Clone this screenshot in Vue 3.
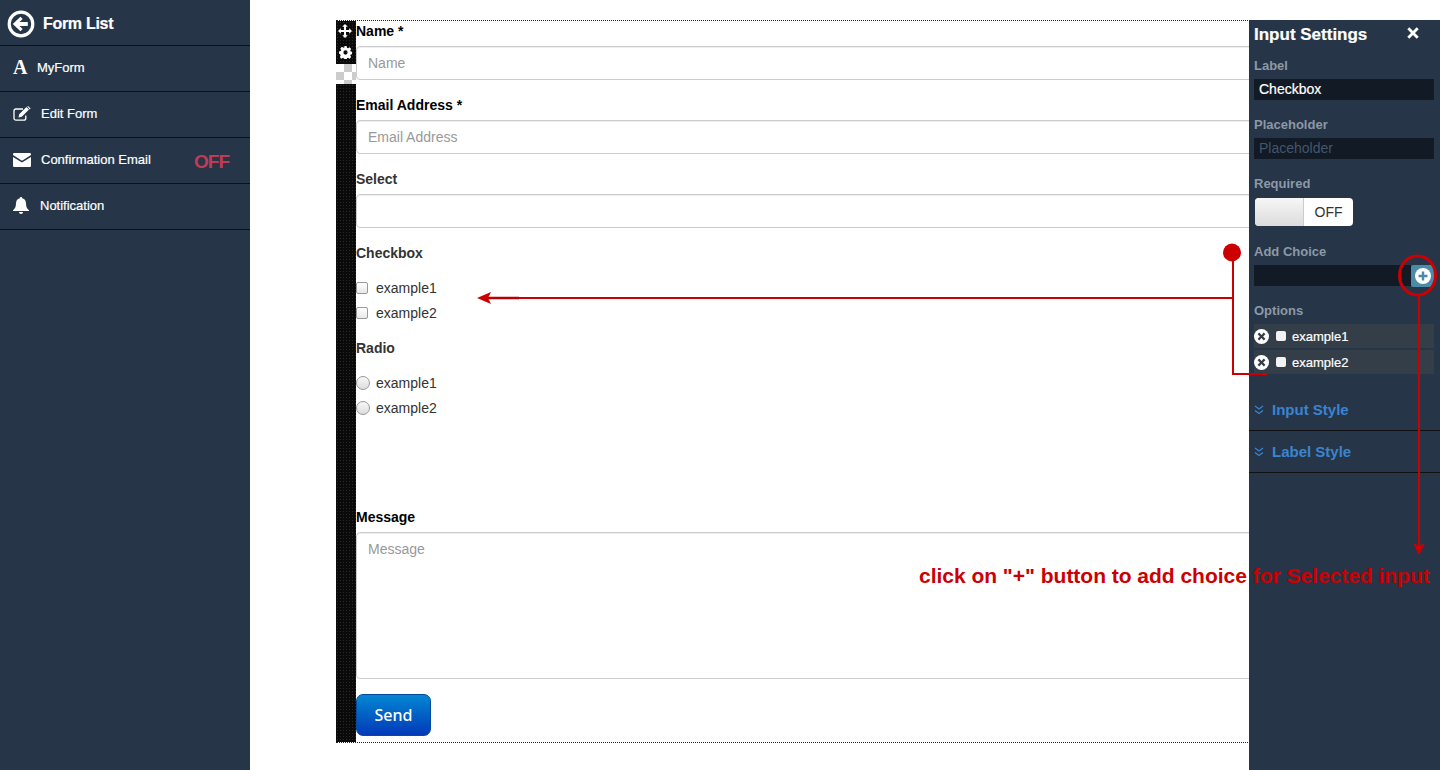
<script setup>
const sideItems = [
  { id: 'form', label: 'MyForm' },
  { id: 'edit', label: 'Edit Form' },
  { id: 'mail', label: 'Confirmation Email', off: true },
  { id: 'bell', label: 'Notification' },
]
const choices = ['example1', 'example2']
</script>

<template>
  <div class="page">
    <aside class="sidebar">
      <div class="side-head">
        <svg class="back" viewBox="0 0 28 28" width="28" height="28">
          <circle cx="14" cy="14" r="11.8" fill="none" stroke="#fff" stroke-width="3.2" />
          <path d="M5.8 14 13.4 6.8l2.3 2.3-3.2 3h8.3v3.8h-8.3l3.2 3-2.3 2.3z" fill="#fff" />
        </svg>
        <span>Form List</span>
      </div>
      <div v-for="item in sideItems" :key="item.id" class="side-item" :class="'item-' + item.id">
        <span v-if="item.id === 'form'" class="glyph-a">A</span>
        <svg v-else-if="item.id === 'edit'" class="ic" viewBox="0 0 18 16" width="18" height="16">
          <path d="M12.8 9.5v2.7a2 2 0 0 1-2 2H3a2 2 0 0 1-2-2V5a2 2 0 0 1 2-2h7" fill="none" stroke="#fff" stroke-width="1.3" />
          <path d="M6.2 8.2 13.4 1l2.6 2.6-7.2 7.2-3.3.8zM14.2.3l.8-.3 2.6 2.6-.8.8z" fill="#fff" />
        </svg>
        <svg v-else-if="item.id === 'mail'" class="ic" viewBox="0 0 18 14" width="18" height="14">
          <path d="M1.2 0h15.6A1.2 1.2 0 0 1 18 1.2v.9L9 7.7 0 2.1v-.9A1.2 1.2 0 0 1 1.2 0z" fill="#fff" />
          <path d="M0 4v8.8A1.2 1.2 0 0 0 1.2 14h15.6a1.2 1.2 0 0 0 1.2-1.2V4L9 9.6z" fill="#fff" />
        </svg>
        <svg v-else class="ic" viewBox="0 0 16 17" width="16" height="17">
          <path d="M8 0a1.2 1.2 0 0 1 1.2 1.3C11.8 1.8 13 4 13 6.5c0 3.5 1.2 5.3 3 6.8v.7H0v-.7c1.8-1.5 3-3.3 3-6.8C3 4 4.200 1.800 6.800 1.300A1.200 1.200 0 0 1 8 0zM6 15h4a2 2 0 0 1-4 0z" fill="#fff" />
        </svg>
        <span class="side-label">{{ item.label }}</span>
        <span v-if="item.off" class="off">OFF</span>
      </div>
    </aside>

    <main class="stage">
      <div class="form-wrap">
        <div class="strip">
          <div class="handles">
            <svg viewBox="0 0 14 14" width="14" height="14">
              <path d="M7 0 9.800 2.800H8V6h3.200V4.200L14 7l-2.800 2.800V8H8v3.200h1.800L7 14l-2.800-2.800H6V8H2.800v1.800L0 7l2.800-2.800V6H6V2.800H4.200z" fill="#fff" />
            </svg>
            <svg viewBox="0 0 14 14" width="13" height="13">
              <path fill-rule="evenodd" d="M5.800 0h2.400l.4 1.900 1.100.5 1.700-1 1.700 1.700-1 1.700.5 1.100 1.900.4v2.400l-1.900.4-.5 1.100 1 1.700-1.700 1.700-1.700-1-1.100.5-.4 1.900H5.800l-.4-1.900-1.100-.5-1.700 1-1.700-1.700 1-1.700-.5-1.100L0 8.200V5.800l1.900-.4.500-1.100-1-1.700 1.700-1.700 1.700 1 1.100-.5zM7 4.700a2.300 2.300 0 1 0 0 4.600 2.300 2.300 0 0 0 0-4.600z" fill="#fff" />
            </svg>
          </div>
          <div class="checker"></div>
          <div class="strip-rest"></div>
        </div>

        <form class="form" @submit.prevent>
          <label class="lbl black first">Name *</label>
          <input class="ctl" placeholder="Name" />
          <label class="lbl black">Email Address *</label>
          <input class="ctl" placeholder="Email Address" />
          <label class="lbl">Select</label>
          <div class="ctl"></div>

          <label class="lbl">Checkbox</label>
          <div class="choices">
            <div v-for="c in choices" :key="c" class="choice">
              <span class="fake-check"></span><span>{{ c }}</span>
            </div>
          </div>
          <label class="lbl">Radio</label>
          <div class="choices">
            <div v-for="c in choices" :key="c" class="choice">
              <span class="fake-radio"></span><span>{{ c }}</span>
            </div>
          </div>

          <label class="lbl black msg-lbl">Message</label>
          <div class="ctl area"><span class="ph">Message</span></div>
          <button class="send" type="button">Send</button>
        </form>
      </div>
    </main>

    <section class="panel">
      <div class="panel-head">
        <span>Input Settings</span>
        <svg class="close" viewBox="0 0 12 12" width="12" height="12">
          <path d="M2.300.3 6 4 9.700.3l2 2L8 6l3.700 3.700-2 2L6 8l-3.700 3.700-2-2L4 6 .3 2.300z" fill="#fff" />
        </svg>
      </div>
      <div class="p-label">Label</div>
      <div class="p-input">Checkbox</div>
      <div class="p-label gap">Placeholder</div>
      <div class="p-input muted">Placeholder</div>
      <div class="p-label gap">Required</div>
      <div class="switch"><span class="sw-knob"></span><span class="sw-off">OFF</span></div>
      <div class="p-label add-label">Add Choice</div>
      <div class="add-row">
        <div class="p-input add-input"></div>
        <div class="add-btn">
          <svg viewBox="0 0 16 16" width="16" height="16">
            <circle cx="8" cy="8" r="8" fill="#fff" />
            <path d="M6.800 3.500h2.400v3.300h3.300v2.400H9.200v3.300H6.800V9.200H3.500V6.800h3.300z" fill="#4a8ba8" />
          </svg>
        </div>
      </div>
      <div class="p-label opt-label">Options</div>
      <div class="opts">
        <div v-for="c in choices" :key="c" class="opt">
          <svg viewBox="0 0 15 15" width="15" height="15">
            <circle cx="7.500" cy="7.500" r="7.500" fill="#fff" />
            <path d="M5.200 3.600 7.500 5.900l2.300-2.300 1.600 1.600-2.300 2.300 2.300 2.300-1.600 1.600-2.300-2.300-2.300 2.300-1.600-1.600 2.300-2.300-2.300-2.300z" fill="#343e48" />
          </svg>
          <span class="opt-box"></span>
          <span>{{ c }}</span>
        </div>
      </div>
      <div class="accordion first-acc">
        <svg viewBox="0 0 10 10" width="10" height="10">
          <path d="M1 1l4 3 4-3M1 5.500l4 3 4-3" fill="none" stroke="#3a84d0" stroke-width="1.300" />
        </svg>
        <span>Input Style</span>
      </div>
      <div class="accordion">
        <svg viewBox="0 0 10 10" width="10" height="10">
          <path d="M1 1l4 3 4-3M1 5.500l4 3 4-3" fill="none" stroke="#3a84d0" stroke-width="1.300" />
        </svg>
        <span>Label Style</span>
      </div>
    </section>

    <svg class="notes" viewBox="0 0 1440 770" width="1440" height="770">
      <g fill="none" stroke="#cc0000" stroke-width="2">
        <path d="M1233 258V374H1267" />
        <path d="M1233 298H486" />
        <path d="M486 298H519" stroke-width="2.500" stroke="#b80000" />
        <ellipse cx="1417.500" cy="275.500" rx="18" ry="19.500" stroke-width="3" />
        <path d="M1419 296V546" />
      </g>
      <circle cx="1232" cy="252.500" r="9" fill="#cc0000" />
      <path d="M477 298 491 292 488 298 491 304z" fill="#cc0000" />
      <path d="M1419 555 1413 543 1419 546 1425 543z" fill="#cc0000" />
    </svg>
    <div class="note-text">click on "+" button to add choice for Selected input</div>
  </div>
</template>

<style>
html, body { margin: 0; padding: 0; background: #fff; overflow: hidden; }
</style>

<style scoped>
.page {
  position: relative;
  display: flex;
  width: 1440px;
  height: 770px;
  overflow: hidden;
  font-family: "Liberation Sans", Arial, sans-serif;
  font-size: 14px;
  color: #333;
  background: #fff;
}
.sidebar {
  flex: 0 0 250px;
  background: #263548;
  color: #fff;
}
.side-head {
  display: flex;
  align-items: center;
  gap: 8px;
  height: 46px;
  padding: 2px 0 0 7px;
  box-sizing: border-box;
  font-size: 16px;
  font-weight: bold;
  letter-spacing: -0.3px;
  border-bottom: 1px solid #111;
  -webkit-text-stroke: 0.2px #fff;
}
.side-item {
  display: flex;
  align-items: center;
  position: relative;
  height: 46px;
  box-sizing: border-box;
  padding-bottom: 2px;
  border-bottom: 1px solid #111;
  font-size: 13px;
  -webkit-text-stroke: 0.2px #fff;
}
.glyph-a {
  width: 37px;
  padding-left: 13px;
  box-sizing: border-box;
  font-family: "Liberation Serif", serif;
  font-weight: bold;
  font-size: 20px;
  -webkit-text-stroke: 0;
}
.ic { margin-left: 13px; }
.item-edit .side-label, .item-mail .side-label { margin-left: 10px; }
.item-bell .side-label { margin-left: 11px; }
.off {
  position: absolute;
  left: 194px;
  top: 13px;
  line-height: 22px;
  font-weight: bold;
  font-size: 19px;
  letter-spacing: -1px;
  color: #c23b55;
  -webkit-text-stroke: 0;
}
.stage {
  flex: 1;
  min-width: 0;
  padding: 20px 0 0 86px;
}
.form-wrap {
  display: flex;
  width: 1200px;
  height: 723px;
  box-sizing: border-box;
  border-top: 1px dotted #222;
  border-bottom: 1px dotted #222;
}
.strip {
  flex: 0 0 20px;
  display: flex;
  flex-direction: column;
  background-color: #0a0a0a;
  background-image: radial-gradient(#2a2a2a 0.8px, transparent 1px);
  background-size: 3px 3px;
}
.handles {
  height: 43px;
  display: flex;
  flex-direction: column;
  align-items: center;
  gap: 8px;
  padding: 3px 2px 0 0;
  box-sizing: border-box;
}
.checker {
  height: 20px;
  background-color: #fff;
  background-image:
    linear-gradient(45deg, #ccc 25%, transparent 25%, transparent 75%, #ccc 75%),
    linear-gradient(45deg, #ccc 25%, transparent 25%, transparent 75%, #ccc 75%);
  background-size: 16px 16px;
  background-position: 0 0, 8px 8px;
}
.strip-rest { flex: 1; }
.form {
  flex: 1;
  display: flex;
  flex-direction: column;
  align-items: flex-start;
}
.lbl {
  display: block;
  height: 16px;
  line-height: 16px;
  margin: 17px 0 7px;
  font-weight: bold;
  font-size: 14px;
}
.lbl.first { margin-top: 2px; }
.black { color: #000; }
.ctl {
  width: 100%;
  height: 34px;
  box-sizing: border-box;
  padding: 0 11px;
  border: 1px solid #ccc;
  border-radius: 4px;
  background: #fff;
  box-shadow: inset 0 1px 1px rgba(0,0,0,.075);
  font: 14px "Liberation Sans", Arial, sans-serif;
  outline: none;
}
.ctl::placeholder, .ph { color: #999; opacity: 1; }
.area {
  height: 147px;
  padding-top: 8px;
  line-height: 17px;
}
.choices {
  display: flex;
  flex-direction: column;
  gap: 5px;
  margin-top: 10px;
}
.choice {
  display: flex;
  align-items: center;
  height: 20px;
  font-size: 14px;
}
.fake-check, .fake-radio {
  width: 12px;
  height: 12px;
  margin-right: 8px;
  box-sizing: border-box;
  border: 1px solid #999;
  background: linear-gradient(#fff, #e8e8e8);
}
.fake-check { border-radius: 2px; }
.fake-radio {
  width: 14px;
  height: 14px;
  margin-right: 6px;
  border-radius: 50%;
  background: linear-gradient(#f8f8f8, #ddd);
}
.msg-lbl { margin-top: 91px; }
.send {
  width: 75px;
  height: 42px;
  margin-top: 15px;
  padding: 0;
  border: 1px solid #034a9c;
  border-radius: 7px;
  background: linear-gradient(#0287d2, #0239b8);
  color: #fff;
  font-family: "Noto Sans", "Open Sans", sans-serif;
  font-size: 16px;
  font-weight: 500;
}
.panel {
  position: absolute;
  left: 1249px;
  top: 20px;
  width: 191px;
  height: 750px;
  display: flex;
  flex-direction: column;
  padding-left: 5px;
  box-sizing: border-box;
  background: #263548;
  color: #8c99a6;
}
.panel-head {
  display: flex;
  align-items: center;
  justify-content: space-between;
  flex: 0 0 28px;
  padding: 2px 21px 0 0;
  box-sizing: border-box;
  color: #fff;
  font-size: 17px;
  font-weight: bold;
  -webkit-text-stroke: 0.2px #fff;
}
.close { margin-top: -4px; }
.p-label {
  flex: 0 0 16px;
  line-height: 16px;
  margin-top: 10px;
  margin-bottom: 5px;
  font-size: 13px;
  font-weight: bold;
}
.p-label.gap { margin-top: 17px; }
.p-input {
  width: 180px;
  flex: 0 0 21px;
  line-height: 21px;
  padding-left: 5px;
  box-sizing: border-box;
  background: #111a25;
  color: #fff;
  font-size: 14px;
  -webkit-text-stroke: 0.2px currentColor;
}
.p-input.muted { color: #44566c; -webkit-text-stroke: 0; }
.switch {
  display: flex;
  width: 98px;
  flex: 0 0 28px;
  margin: 1px 0 0 1px;
  border-radius: 4px;
  overflow: hidden;
  background: #fff;
  color: #333;
}
.sw-knob {
  width: 48px;
  border-right: 1px solid #ccc;
  background: linear-gradient(#f6f6f6, #dcdcdc);
}
.sw-off {
  flex: 1;
  text-align: center;
  line-height: 28px;
  font-size: 14px;
}
.add-label { margin-top: 18px; }
.add-row { display: flex; align-items: flex-start; width: 180px; flex: 0 0 22px; }
.add-input { flex: 1; width: auto; height: 21px; }
.add-btn {
  display: flex;
  align-items: center;
  justify-content: center;
  width: 23px;
  height: 22px;
  border-radius: 2px;
  background: #4a8ba8;
}
.opt-label { margin-top: 16px; }
.opts {
  display: flex;
  flex-direction: column;
  gap: 2px;
  width: 180px;
}
.opt {
  display: flex;
  align-items: center;
  height: 24px;
  background: #343e48;
  color: #fff;
  font-size: 13px;
  -webkit-text-stroke: 0.2px #fff;
}
.opt-box {
  width: 10px;
  height: 10px;
  margin: 0 6px 0 7px;
  border-radius: 2px;
  background: #f2f2f2;
}
.accordion {
  display: flex;
  align-items: center;
  gap: 8px;
  flex: 0 0 42px;
  box-sizing: border-box;
  margin-left: -5px;
  padding-left: 5px;
  border-bottom: 1px solid #111;
  color: #3a84d0;
  font-size: 15px;
  font-weight: bold;
}
.first-acc { margin-top: 15px; }
.notes {
  position: absolute;
  left: 0;
  top: 0;
  pointer-events: none;
}
.note-text {
  position: absolute;
  left: 919px;
  top: 564px;
  line-height: 24px;
  font-size: 21px;
  font-weight: bold;
  letter-spacing: -0.02px;
  color: #cc0000;
  white-space: nowrap;
}
</style>
